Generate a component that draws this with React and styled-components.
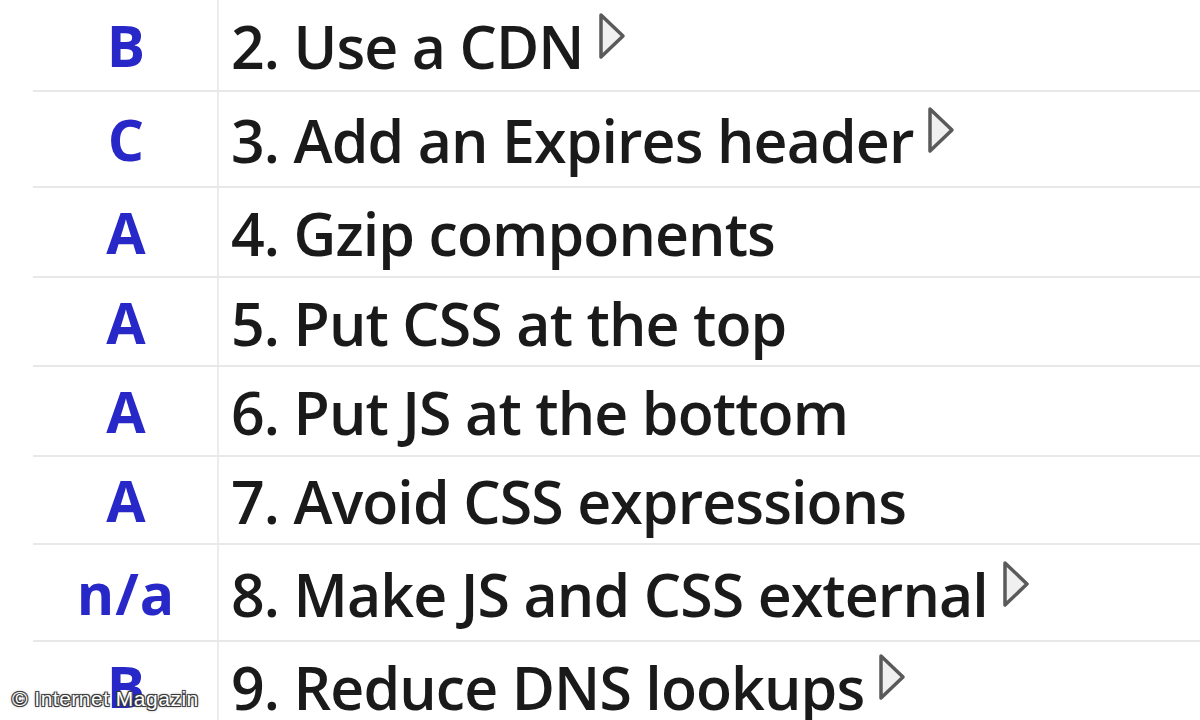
import React from "react";
import styled, { createGlobalStyle } from "styled-components";

const rules = [
  { grade: "B", label: "2. Use a CDN", more: true, height: 92 },
  { grade: "C", label: "3. Add an Expires header", more: true, height: 96 },
  { grade: "A", label: "4. Gzip components", height: 90 },
  { grade: "A", label: "5. Put CSS at the top", height: 89 },
  { grade: "A", label: "6. Put JS at the bottom", height: 90 },
  { grade: "A", label: "7. Avoid CSS expressions", height: 88 },
  { grade: "n/a", label: "8. Make JS and CSS external", more: true, height: 97 },
  { grade: "B", label: "9. Reduce DNS lookups", more: true, height: 90 },
];

const GlobalStyle = createGlobalStyle`
  html, body {
    margin: 0;
    padding: 0;
    background: #ffffff;
  }
  body {
    font-family: "Open Sans", "DejaVu Sans", sans-serif;
  }
`;

const Page = styled.div`
  position: relative;
  width: 1200px;
  height: 720px;
  overflow: hidden;
  background: #fff;
`;

const Table = styled.div`
  display: flex;
  flex-direction: column;
  margin-left: 33px;
`;

const Row = styled.div`
  display: grid;
  grid-template-columns: 186px 1fr;
  height: ${({ $h }) => $h}px;
  flex-shrink: 0;
  border-bottom: 2px solid #e8e8e8;
  box-sizing: border-box;
`;

const GradeCell = styled.div`
  display: flex;
  align-items: center;
  justify-content: center;
  border-right: 2px solid #ececec;
  padding-left: 2px;
  font-family: "Open Sans", sans-serif;
  font-weight: 700;
  font-size: 57px;
  letter-spacing: ${({ $na }) => ($na ? "1px" : "0")};
  color: #2828c8;
`;

const LabelCell = styled.div`
  display: flex;
  align-items: center;
  padding-left: 12px;
  padding-top: 2px;
  font-family: "Open Sans", sans-serif;
  font-weight: 600;
  font-size: 59px;
  letter-spacing: -0.9px;
  color: #1a1a1a;
  white-space: nowrap;
`;

const Arrow = styled.svg`
  flex-shrink: 0;
  margin-left: 13px;
  margin-top: -20px;
`;

const Watermark = styled.div`
  position: absolute;
  left: 12px;
  bottom: 9px;
  font-family: "Liberation Sans", Arial, sans-serif;
  font-size: 21px;
  letter-spacing: 0.5px;
  color: #ffffff;
  text-shadow: 1px 1px 0 #3a3a3a, -1px -1px 0 #3a3a3a, 1px -1px 0 #3a3a3a,
    -1px 1px 0 #3a3a3a, 0 0 3px #222;
`;

const MoreArrow = () => (
  <Arrow width="30" height="50" viewBox="0 0 30 50">
    <path
      d="M4 4 L26 25 L4 46 Z"
      fill="#f0f0f0"
      stroke="#5a5a5a"
      strokeWidth="3.5"
      strokeLinejoin="round"
    />
  </Arrow>
);

export default function App() {
  return (
    <Page>
      <GlobalStyle />
      <Table>
        {rules.map((r, i) => (
          <Row key={i} $h={r.height}>
            <GradeCell $na={r.grade === "n/a"}>{r.grade}</GradeCell>
            <LabelCell>
              {r.label}
              {r.more && <MoreArrow />}
            </LabelCell>
          </Row>
        ))}
      </Table>
      <Watermark>© Internet Magazin</Watermark>
    </Page>
  );
}
